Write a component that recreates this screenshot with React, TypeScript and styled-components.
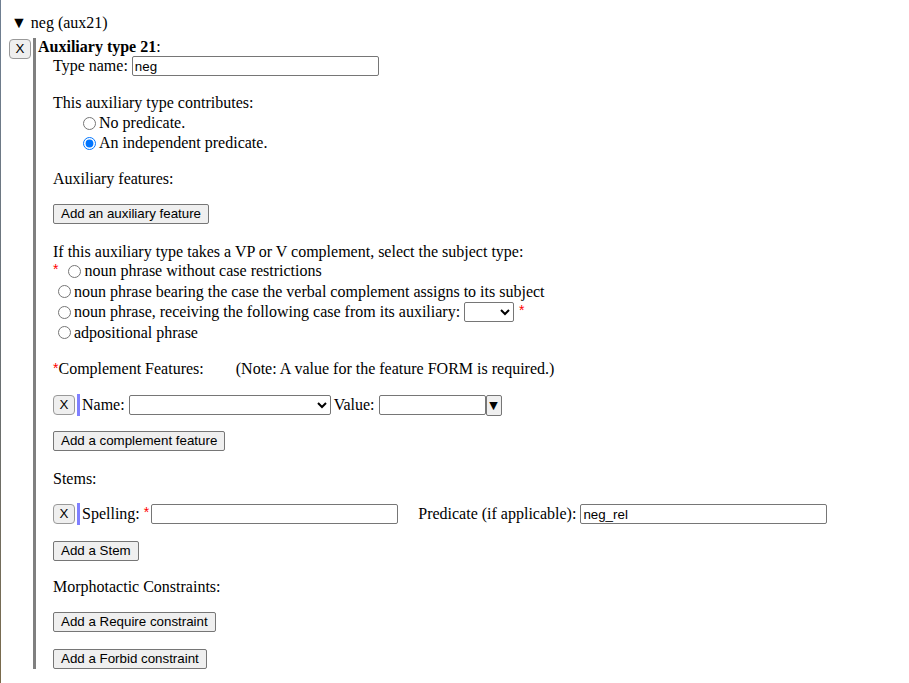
import React from "react";
import styled, { createGlobalStyle } from "styled-components";

const Global = createGlobalStyle`
  html, body { background: #fff; }
  body {
    margin: 8px;
    font-family: "Liberation Serif", "Times New Roman", serif;
    font-size: 16px;
    color: #000;
  }
  * { box-sizing: border-box; }
`;

const EdgeLine = styled.div`
  position: fixed;
  left: 0;
  top: 0;
  bottom: 0;
  width: 1px;
  background: linear-gradient(#6f7f92, #6a6f70 60%, #7a6a4a);
`;

const Summary = styled.div`
  height: 18px;
  line-height: 18px;
  margin: 6px 0 0 3px;
  white-space: nowrap;
`;

const Entry = styled.div`
  display: flex;
  align-items: flex-start;
  margin-top: 6px;
`;

const XButton = styled.button<{ $outer?: boolean }>`
  width: 22px;
  height: 20px;
  padding: 0;
  margin: ${(p) => (p.$outer ? "1px 0 0 1px" : "0")};
  font-family: "Liberation Sans", Arial, sans-serif;
  font-size: 13.33px;
  background: #efefef;
  border: 1px solid #999;
  border-radius: 4px;
  color: #000;
  line-height: 18px;
  flex: none;
`;

const EntryBody = styled.div`
  margin-left: 2px;
  border-left: 3px solid #808080;
  padding-left: 2px;
  flex: 1;
`;

const Title = styled.div`
  height: 18px;
  line-height: 18px;
  font-weight: bold;
  span { font-weight: normal; }
`;

const Inner = styled.div`
  padding-left: 15px;
  display: flex;
  flex-direction: column;
  align-items: flex-start;
`;

const Row = styled.div<{ $mt?: number; $h?: number; $indent?: number }>`
  display: flex;
  align-items: center;
  height: ${(p) => p.$h ?? 18}px;
  margin-top: ${(p) => p.$mt ?? 0}px;
  padding-left: ${(p) => p.$indent ?? 0}px;
  white-space: nowrap;
  line-height: 18px;
`;

const TextInput = styled.input<{ $w?: number; $ml?: number }>`
  width: ${(p) => p.$w ?? 247}px;
  height: 20px;
  margin: 0 0 0 ${(p) => p.$ml ?? 4}px;
  padding: 1px 2px;
  font-family: "Liberation Sans", Arial, sans-serif;
  font-size: 13.33px;
  border: 1px solid #767676;
  border-radius: 2px;
  background: #fff;
  color: #000;
`;

const Radio = styled.input`
  width: 13px;
  height: 13px;
  margin: 0 3px 0 5px;
  accent-color: #0075ff;
`;

const Star = styled.span`
  color: red;
  font-family: "Liberation Sans", Arial, sans-serif;
  font-size: 14px;
  line-height: 13px;
  align-self: flex-start;
  margin-top: 2px;
`;

const Button = styled.button<{ $mt?: number }>`
  height: 20px;
  margin-top: ${(p) => p.$mt ?? 0}px;
  padding: 0 7px;
  font-family: "Liberation Sans", Arial, sans-serif;
  font-size: 13.33px;
  background: #efefef;
  border: 1px solid #767676;
  border-radius: 2px;
  color: #000;
  line-height: 18px;
  white-space: nowrap;
`;

const Select = styled.select<{ $w: number }>`
  width: ${(p) => p.$w}px;
  height: 20px;
  margin: 0 3px 0 4px;
  font-family: "Liberation Sans", Arial, sans-serif;
  font-size: 13.33px;
  border: 1px solid #767676;
  border-radius: 2px;
  background: #fff;
`;

const Bar = styled.span`
  width: 3px;
  height: 22px;
  background: #8080ff;
  margin: 0 2px;
  align-self: center;
`;

const DropButton = styled.button`
  width: 16px;
  height: 21px;
  padding: 0;
  font-size: 11px;
  font-family: "DejaVu Sans", sans-serif;
  background: #efefef;
  border: 1px solid #767676;
  border-radius: 2px;
  line-height: 19px;
`;

const Note = styled.span`
  margin-left: 32px;
`;

const Gap = styled.span<{ $w: number }>`
  display: inline-block;
  width: ${(p) => p.$w}px;
`;

export default function App() {
  return (
    <>
      <Global />
      <EdgeLine />
      <Summary>▼ neg (aux21)</Summary>
      <Entry>
        <XButton $outer>X</XButton>
        <EntryBody>
          <Title>
            Auxiliary type 21<span>:</span>
          </Title>
          <Inner>
            <Row $h={20}>
              Type name:
              <TextInput defaultValue="neg" $w={247} />
            </Row>
            <Row $mt={18}>This auxiliary type contributes:</Row>
            <Row $mt={1} $h={20} $indent={25}>
              <Radio type="radio" name="pred" />
              No predicate.
            </Row>
            <Row $h={20} $indent={25}>
              <Radio type="radio" name="pred" defaultChecked />
              An independent predicate.
            </Row>
            <Row $mt={17}>Auxiliary features:</Row>
            <Button $mt={16}>Add an auxiliary feature</Button>
            <Row $mt={19}>
              If this auxiliary type takes a VP or V complement, select the subject type:
            </Row>
            <Row $h={20}>
              <Star>*</Star>
              <Gap $w={5} />
              <Radio type="radio" name="subj" />
              noun phrase without case restrictions
            </Row>
            <Row $h={21}>
              <Radio type="radio" name="subj" />
              noun phrase bearing the case the verbal complement assigns to its subject
            </Row>
            <Row $h={20}>
              <Radio type="radio" name="subj" />
              noun phrase, receiving the following case from its auxiliary:
              <Select $w={50}>
                <option></option>
              </Select>
              <Gap $w={2} />
              <Star>*</Star>
            </Row>
            <Row $h={21}>
              <Radio type="radio" name="subj" />
              adpositional phrase
            </Row>
            <Row $mt={17}>
              <Star>*</Star>
              Complement Features:
              <Note>(Note: A value for the feature FORM is required.)</Note>
            </Row>
            <Row $mt={17} $h={20}>
              <XButton>X</XButton>
              <Bar />
              Name:
              <Select $w={202}>
                <option></option>
              </Select>
              Value:
              <TextInput $w={107} />
              <DropButton>▼</DropButton>
            </Row>
            <Button $mt={16}>Add a complement feature</Button>
            <Row $mt={19}>Stems:</Row>
            <Row $mt={16} $h={20}>
              <XButton>X</XButton>
              <Bar />
              Spelling:
              <Gap $w={4} />
              <Star>*</Star>
              <TextInput $w={247} $ml={2} />
              <Gap $w={20} />
              Predicate (if applicable):
              <TextInput defaultValue="neg_rel" $w={247} />
            </Row>
            <Button $mt={17}>Add a Stem</Button>
            <Row $mt={17}>Morphotactic Constraints:</Row>
            <Button $mt={16}>Add a Require constraint</Button>
            <Button $mt={17}>Add a Forbid constraint</Button>
          </Inner>
        </EntryBody>
      </Entry>
    </>
  );
}
